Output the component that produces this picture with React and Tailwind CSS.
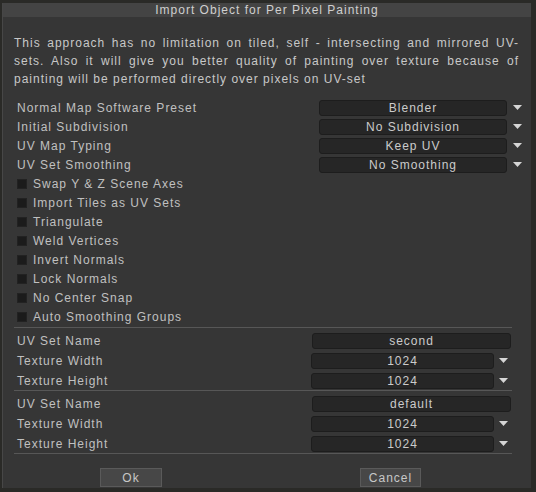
import React from "react";

const font = { fontFamily: '"Liberation Sans", Arial, sans-serif' };

function Arrow() {
  return (
    <svg width="9" height="5" viewBox="0 0 9 5" className="block">
      <polygon points="0,0 9,0 4.5,5" fill="#d6d6d6" />
    </svg>
  );
}

function Dropdown({ value, wide }) {
  return (
    <div className="flex items-center h-[19px]">
      <div
        className={`h-[16px] ${wide ? "w-[188px]" : "w-[183px]"} bg-[#262626] border border-[#1d1d1d] rounded-[3px] flex items-center justify-center text-[#cbcbcb] leading-none`}
      >
        {value}
      </div>
      <div className={`${wide ? "w-[20px] pl-[6px]" : "w-[19px] pl-[5px]"} flex items-center`}>
        <Arrow />
      </div>
    </div>
  );
}

function SelectRow({ label, value }) {
  return (
    <div className="flex items-center h-[19px] pl-[14px] pr-[4px]">
      <span className="text-[#c0c0c0]">{label}</span>
      <div className="ml-auto">
        <Dropdown value={value} wide />
      </div>
    </div>
  );
}

function CheckRow({ label }) {
  return (
    <div className="flex items-center h-[19px] pl-[14px]">
      <div className="w-[10px] h-[10px] bg-[#1b1b1b] border border-[#222]" />
      <span className="ml-[6px] text-[#c0c0c0]">{label}</span>
    </div>
  );
}

function UvSection({ name }) {
  return (
    <div className="flex flex-col gap-[1px] pt-[3px]">
      <div className="flex items-center h-[19px] pl-[14px] pr-[20px]">
        <span className="text-[#c0c0c0]">UV Set Name</span>
        <div className="ml-auto h-[16px] w-[199px] bg-[#262626] border border-[#1d1d1d] rounded-[3px] flex items-center justify-center text-[#cbcbcb] leading-none">
          {name}
        </div>
      </div>
      {["Texture Width", "Texture Height"].map((l) => (
        <div key={l} className="flex items-center h-[19px] pl-[14px] pr-[18px]">
          <span className="text-[#c0c0c0]">{l}</span>
          <div className="ml-auto">
            <Dropdown value="1024" />
          </div>
        </div>
      ))}
    </div>
  );
}

export default function App() {
  const checks = [
    "Swap Y & Z Scene Axes",
    "Import Tiles as UV Sets",
    "Triangulate",
    "Weld Vertices",
    "Invert Normals",
    "Lock Normals",
    "No Center Snap",
    "Auto Smoothing Groups",
  ];

  return (
    <div
      className="w-[536px] h-[492px] bg-[#2a2a27] pt-[3px] pl-[2px] pr-[5px] pb-[4px] text-[12px] tracking-[1px]"
      style={font}
    >
      <div className="h-full flex flex-col bg-[#363636] border-l border-[#474747]">
        {/* title bar */}
        <div className="h-[14px] bg-[#444444] flex items-center justify-center text-[#cfcfcf] leading-none">
          Import Object for Per Pixel Painting
        </div>

        {/* description */}
        <div className="pt-[17px] pl-[11px] pr-[12px] text-[#c8c8c8] leading-[18px]">
          <div className="text-justify [text-align-last:justify]">
            This approach has no limitation on tiled, self - intersecting and mirrored UV-
          </div>
          <div className="text-justify [text-align-last:justify]">
            sets. Also it will give you better quality of painting over texture because of
          </div>
          <div>painting will be performed directly over pixels on UV-set</div>
        </div>

        {/* options */}
        <div className="mt-[10px] flex flex-col">
          <SelectRow label="Normal Map Software Preset" value="Blender" />
          <SelectRow label="Initial Subdivision" value="No Subdivision" />
          <SelectRow label="UV Map Typing" value="Keep UV" />
          <SelectRow label="UV Set Smoothing" value="No Smoothing" />
          {checks.map((c) => (
            <CheckRow key={c} label={c} />
          ))}
        </div>

        <div className="mt-[1px] ml-[11px] mr-[19px] border-t border-[#575757]" />
        <UvSection name="second" />
        <div className="ml-[11px] mr-[19px] border-t border-[#575757]" />
        <UvSection name="default" />
        <div className="ml-[11px] mr-[19px] border-t border-[#575757]" />

        {/* buttons */}
        <div className="mt-auto flex pl-[97px] pb-[1px]">
          <button className="w-[62px] h-[19px] bg-[#474747] border border-[#5a5a5a] text-[#c8c8c8] leading-none">
            Ok
          </button>
          <button className="ml-[198px] w-[61px] h-[19px] bg-[#474747] border border-[#5a5a5a] text-[#c8c8c8] leading-none">
            Cancel
          </button>
        </div>
      </div>
    </div>
  );
}
